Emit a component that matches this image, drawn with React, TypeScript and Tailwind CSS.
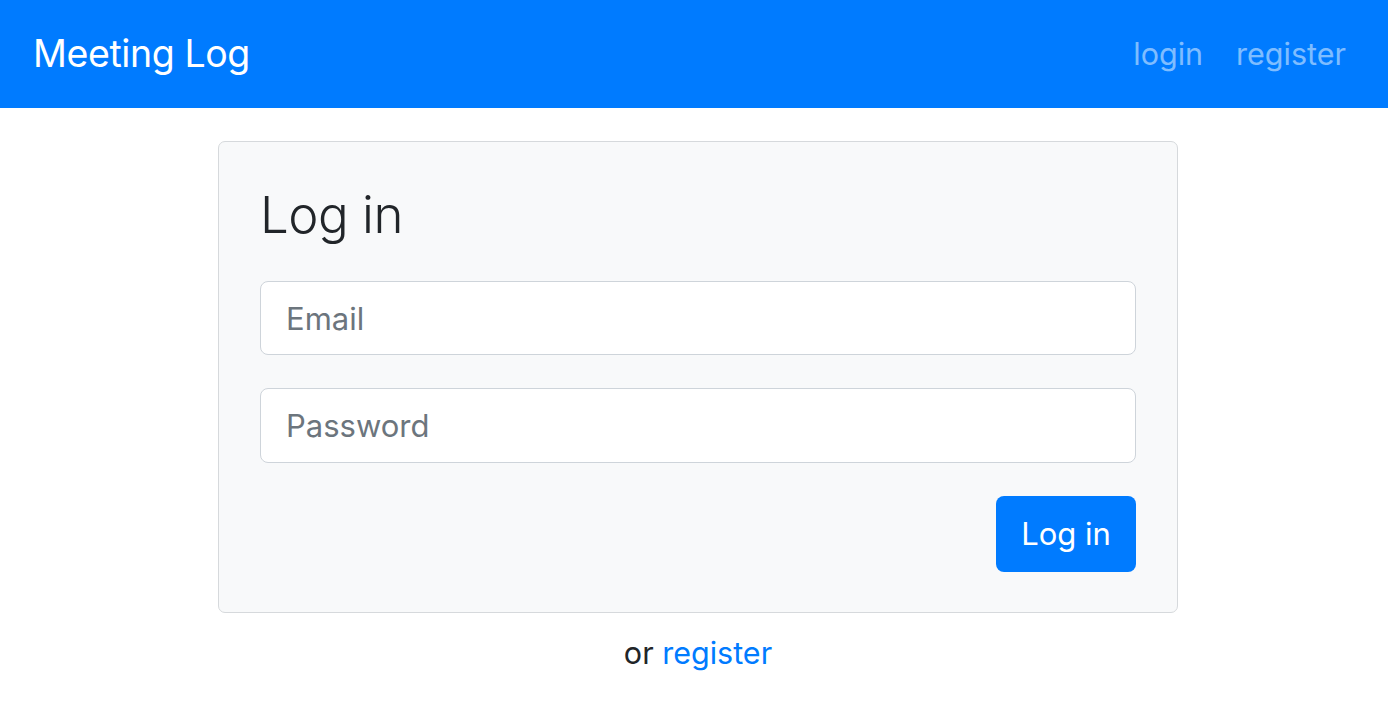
import React from "react";

export default function App() {
  return (
    <div className="min-h-[710px] bg-white text-[#212529]" style={{ fontFamily: 'Inter, "Noto Sans", sans-serif' }}>
      <nav className="h-[108px] bg-[#007bff] flex items-center justify-between pl-[33px] pr-[42px]">
        <span className="text-[37.5px] text-white leading-none tracking-[-0.4px]">Meeting Log</span>
        <div className="flex items-center gap-[33px] text-[30.5px] text-white/50 leading-none">
          <span>login</span>
          <span>register</span>
        </div>
      </nav>
      <div className="w-[960px] ml-[218px] mt-[33px]">
        <div className="bg-[#f8f9fa] border border-[#d6d9dc] rounded-[7px] px-[41px] pt-[42px] pb-[40px]">
          <h3 className="text-[51px] font-light leading-[1.2] mb-[36px] tracking-[-0.5px]">Log in</h3>
          <input
            placeholder="Email"
            className="block w-full h-[74px] bg-white border border-[#ced4da] rounded-[8px] px-[25px] text-[31px] placeholder:text-[#6c757d] outline-none"
          />
          <input
            type="password"
            placeholder="Password"
            className="block w-full h-[75px] mt-[33px] bg-white border border-[#ced4da] rounded-[8px] px-[25px] text-[31px] placeholder:text-[#6c757d] outline-none"
          />
          <div className="flex justify-end mt-[33px]">
            <button className="w-[140px] h-[76px] bg-[#007bff] text-white text-[31px] rounded-[8px]">Log in</button>
          </div>
        </div>
        <p className="text-center text-[30.5px] mt-[22px] leading-[1.2]">
          or <span className="text-[#007bff]">register</span>
        </p>
      </div>
    </div>
  );
}
